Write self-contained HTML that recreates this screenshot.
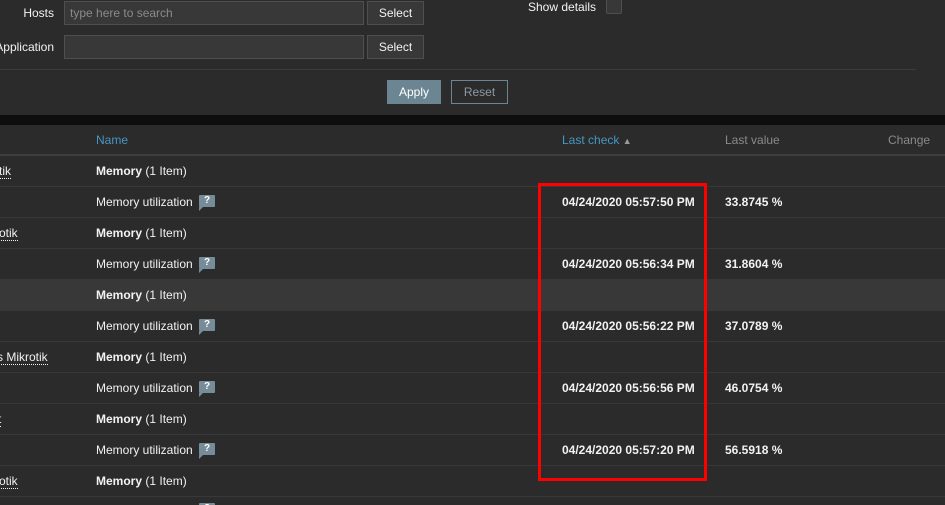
<!DOCTYPE html>
<html style="width:945px;height:505px;overflow:hidden"><head><style>
*{margin:0;padding:0;box-sizing:border-box}
body{width:945px;height:505px;overflow:hidden;background:#2b2b2b;font-family:"Liberation Sans",Arial,sans-serif;font-size:12px;color:#f2f2f2;position:relative}
.a{position:absolute;white-space:nowrap}
.lbl{font-size:12px;text-align:right}
.inp{position:absolute;background:#383838;border:1px solid #4f4f4f;height:24px}
.btn{position:absolute;background:#383838;border:1px solid #4f4f4f;height:24px;width:57px;text-align:center;line-height:22px;font-size:12px;color:#f2f2f2}
.row{position:absolute;left:0;width:945px;height:31px;border-bottom:1px solid #383838;overflow:hidden}
.row span{position:absolute;top:8px;line-height:14px}
.q{display:inline-block;position:absolute;top:8px;width:16px;height:12px;background:#768d99;color:#fff;font-size:10px;font-weight:bold;text-align:center;line-height:12px;border-radius:1px;font-style:normal}
.q:after{content:"";position:absolute;left:0;bottom:-4px;border-left:4px solid #768d99;border-bottom:4px solid transparent}
.u{border-bottom:1px dotted #f2f2f2}
</style></head><body>
<div class="a lbl" style="left:0;width:54px;top:6px">Hosts</div>
<div class="inp" style="left:64px;top:1px;width:300px"><span class="a" style="left:5px;top:4px;color:#8a8a8a">type here to search</span></div>
<div class="btn" style="left:367px;top:1px">Select</div>
<div class="a lbl" style="left:-10px;width:64px;top:40px">Application</div>
<div class="inp" style="left:64px;top:35px;width:300px"></div>
<div class="btn" style="left:367px;top:35px">Select</div>
<div class="a" style="left:528px;top:0px">Show details</div>
<div class="a" style="left:606px;top:-3px;width:16px;height:17px;border:1px solid #4f4f4f;border-radius:2px;background:#383838"></div>
<div class="a" style="left:0;top:69px;width:916px;height:1px;background:#3c3c3c"></div>
<div class="a" style="left:387px;top:80px;width:54px;height:24px;background:#6c8592;text-align:center;line-height:24px;color:#fff">Apply</div>
<div class="a" style="left:451px;top:80px;width:57px;height:24px;border:1px solid #6c8592;text-align:center;line-height:22px;color:#8c9ba3">Reset</div>
<div class="a" style="left:0;top:115px;width:945px;height:10px;background:#0e0e0f"></div>
<div class="a" style="left:96px;top:133px;color:#4796c4">Name</div>
<div class="a" style="left:562px;top:133px;color:#4796c4">Last check <span style="color:#9a9a9a;font-size:9px">&#9650;</span></div>
<div class="a" style="left:725px;top:133px;color:#8a8a8a">Last value</div>
<div class="a" style="left:888px;top:133px;color:#8a8a8a">Change</div>
<div class="a" style="left:0;top:154px;width:945px;height:2px;background:#3e3e3e"></div>

<div class="row" style="top:156px"><span class="u" style="left:-1px">tik</span><span style="left:96px"><b>Memory</b> (1 Item)</span></div>
<div class="row" style="top:187px"><span style="left:96px">Memory utilization</span><i class="q" style="left:199px">?</i><span style="left:562px;font-weight:bold">04/24/2020 05:57:50 PM</span><span style="left:725px;font-weight:bold">33.8745 %</span></div>
<div class="row" style="top:218px"><span class="u" style="left:-1px">otik</span><span style="left:96px"><b>Memory</b> (1 Item)</span></div>
<div class="row" style="top:249px"><span style="left:96px">Memory utilization</span><i class="q" style="left:199px">?</i><span style="left:562px;font-weight:bold">04/24/2020 05:56:34 PM</span><span style="left:725px;font-weight:bold">31.8604 %</span></div>
<div class="row" style="top:280px;background:#383838"><span style="left:96px"><b>Memory</b> (1 Item)</span></div>
<div class="row" style="top:311px"><span style="left:96px">Memory utilization</span><i class="q" style="left:199px">?</i><span style="left:562px;font-weight:bold">04/24/2020 05:56:22 PM</span><span style="left:725px;font-weight:bold">37.0789 %</span></div>
<div class="row" style="top:342px"><span class="u" style="left:-3px">s Mikrotik</span><span style="left:96px"><b>Memory</b> (1 Item)</span></div>
<div class="row" style="top:373px"><span style="left:96px">Memory utilization</span><i class="q" style="left:199px">?</i><span style="left:562px;font-weight:bold">04/24/2020 05:56:56 PM</span><span style="left:725px;font-weight:bold">46.0754 %</span></div>
<div class="row" style="top:404px"><span class="u" style="left:-2px">t</span><span style="left:96px"><b>Memory</b> (1 Item)</span></div>
<div class="row" style="top:435px"><span style="left:96px">Memory utilization</span><i class="q" style="left:199px">?</i><span style="left:562px;font-weight:bold">04/24/2020 05:57:20 PM</span><span style="left:725px;font-weight:bold">56.5918 %</span></div>
<div class="row" style="top:466px"><span class="u" style="left:-1px">otik</span><span style="left:96px"><b>Memory</b> (1 Item)</span></div>
<div class="row" style="top:497px;height:8px;border:0"><i class="q" style="left:199px;top:6px">?</i></div>

<div class="a" style="left:538px;top:183px;width:169px;height:298px;border:3px solid #ff0000"></div>
</body></html>
